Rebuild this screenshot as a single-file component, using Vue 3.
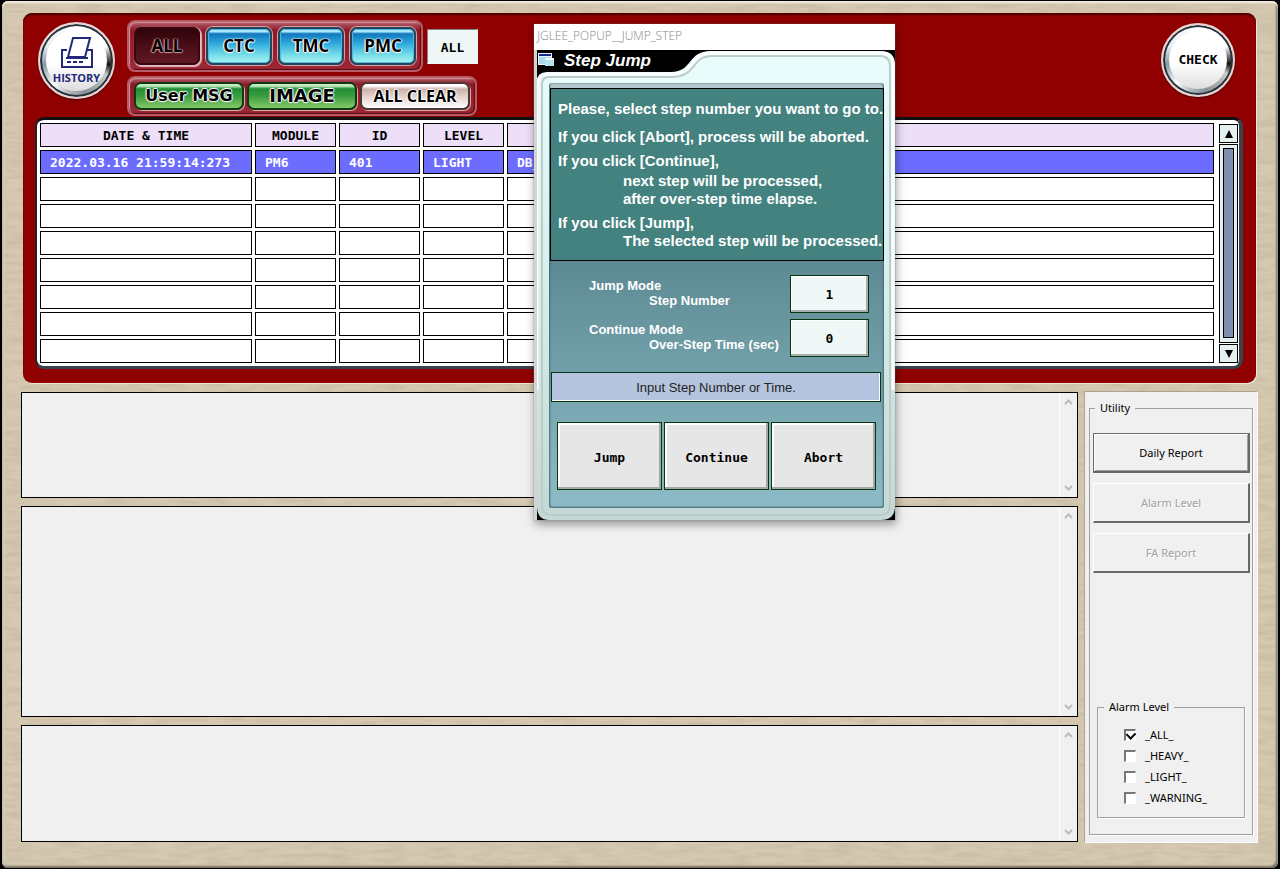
<script setup>
import { ref } from 'vue'

const modules = ['ALL', 'CTC', 'TMC', 'PMC']
const activeModule = ref('ALL')
const filter = ref('ALL')
const columns = ['DATE & TIME', 'MODULE', 'ID', 'LEVEL', '']
const alarms = [['2022.03.16 21:59:14:273', 'PM6', '401', 'LIGHT', 'DB_']]
const emptyRows = 7
const panes = ['first', 'second', 'third']
const reports = [
  { name: 'Daily Report', enabled: true },
  { name: 'Alarm Level', enabled: false },
  { name: 'FA Report', enabled: false },
]
const levels = ref([
  { name: '_ALL_', on: true },
  { name: '_HEAVY_', on: false },
  { name: '_LIGHT_', on: false },
  { name: '_WARNING_', on: false },
])
const stepNumber = ref('1')
const overTime = ref('0')
</script>

<template>
  <div class="screen">
    <main class="frame">
      <svg class="texture" aria-hidden="true">
        <filter id="grain" x="0" y="0" width="100%" height="100%">
          <feTurbulence type="fractalNoise" baseFrequency="0.04 0.22" numOctaves="2" seed="4" />
          <feColorMatrix values="0 0 0 0 0.5  0 0 0 0 0.43  0 0 0 0 0.3  1 0 0 0 -0.35" />
        </filter>
        <rect width="100%" height="100%" filter="url(#grain)" />
      </svg>

      <section class="alarm">
        <header class="toolbar">
          <button class="round history" type="button">
            <svg width="34" height="34" viewBox="0 0 34 34" fill="none" stroke="#23297a" stroke-width="2">
              <path d="M7 14H2V31H32V14H27M6 22H28" />
              <path d="M13 2H30L25 21H8Z" fill="#fff" />
              <path d="M7 26H11M13 26H17M19 26H23" />
            </svg>
            <span>HISTORY</span>
          </button>
          <div class="groups">
            <div class="line">
              <div class="group modules">
                <button
                  v-for="m in modules"
                  :key="m"
                  type="button"
                  :class="['module', { active: m === activeModule }]"
                  @click="activeModule = m"
                >{{ m }}</button>
              </div>
              <input v-model="filter" class="filter" aria-label="Module filter" />
            </div>
            <div class="group actions">
              <button type="button" class="green">User MSG</button>
              <button type="button" class="green image">IMAGE</button>
              <button type="button" class="clear">ALL CLEAR</button>
            </div>
          </div>
          <button class="round check" type="button">CHECK</button>
        </header>

        <div class="list">
          <table>
            <colgroup>
              <col class="c-date" /><col class="c-mid" /><col class="c-mid" /><col class="c-mid" /><col />
            </colgroup>
            <thead>
              <tr><th v-for="(c, i) in columns" :key="i">{{ c }}</th></tr>
            </thead>
            <tbody>
              <tr v-for="(row, r) in alarms" :key="r" class="selected">
                <td v-for="(cell, i) in row" :key="i">{{ cell }}</td>
              </tr>
              <tr v-for="n in emptyRows" :key="'e' + n">
                <td v-for="(c, i) in columns" :key="i"></td>
              </tr>
            </tbody>
          </table>
          <div class="scroll">
            <button type="button" aria-label="Scroll up">
              <svg width="8" height="8" viewBox="0 0 8 8"><path d="M4 0L8 8H0Z" /></svg>
            </button>
            <div class="track"><div class="thumb"></div></div>
            <button type="button" aria-label="Scroll down">
              <svg width="8" height="8" viewBox="0 0 8 8"><path d="M0 0H8L4 8Z" /></svg>
            </button>
          </div>
        </div>
      </section>

      <section class="lower">
        <div class="panes">
          <div v-for="p in panes" :key="p" :class="['pane', p]">
            <textarea readonly :aria-label="p + ' message pane'"></textarea>
            <div class="arrows">
              <svg width="9" height="6" viewBox="0 0 9 6"><path d="M1 5L4.500 1.500L8 5" /></svg>
              <svg width="9" height="6" viewBox="0 0 9 6"><path d="M1 1L4.500 4.500L8 1" /></svg>
            </div>
          </div>
        </div>
        <aside class="side">
          <fieldset class="utility">
            <legend>Utility</legend>
            <button v-for="r in reports" :key="r.name" type="button" class="report" :disabled="!r.enabled">
              {{ r.name }}
            </button>
            <fieldset class="levels">
              <legend>Alarm Level</legend>
              <label v-for="l in levels" :key="l.name">
                <input v-model="l.on" type="checkbox" />{{ l.name }}
              </label>
            </fieldset>
          </fieldset>
        </aside>
      </section>
    </main>

    <div class="popup" role="dialog" aria-label="Step Jump">
      <div class="caption">JGLEE_POPUP__JUMP_STEP</div>
      <div class="shell">
        <svg class="folder" viewBox="0 0 358 470" preserveAspectRatio="none" aria-hidden="true">
          <defs>
            <linearGradient id="mint" x1="0" y1="0" x2="0" y2="1">
              <stop offset="0" stop-color="#eafdfd" />
              <stop offset="0.5" stop-color="#d6eeec" />
              <stop offset="1" stop-color="#c2d9d5" />
            </linearGradient>
          </defs>
          <path d="M0 32Q0 22 10 22H134C156 22 150 1 174 1H344Q358 1 358 15V456Q358 470 344 470H12Q0 470 0 456Z" fill="url(#mint)" />
          <path d="M0 340V33Q2 24 11 24H134C158 24 152 3 174 3H344Q356 3 356 15V340" fill="none" stroke="#fafefe" stroke-width="3" />
          <path d="M5 455V34Q5 27 12 27H135C160 27 154 6 175 6H343Q353 6 353 16V455Q353 465 343 465H14Q5 465 5 455Z" fill="none" stroke="#becbc8" stroke-width="2" />
        </svg>
        <h1>
          <svg width="17" height="15" viewBox="0 0 17 15">
            <path d="M0 0H14V12H0Z" fill="#e9f7fb" />
            <path d="M1 1H13V3H1Z" fill="#152b8c" />
            <path d="M1 4H13V11H1Z" fill="#a9d9ed" />
            <path d="M7 5H16V13H7Z" fill="#b7e0f1" />
            <path d="M7 5H16V7H7Z" fill="#f4fbff" />
          </svg>
          Step Jump
        </h1>
        <div class="panel">
          <div class="info">
            <p>Please, select step number you want to go to.</p>
            <p>If you click [Abort], process will be aborted.</p>
            <p>If you click [Continue],</p>
            <p class="indent">next step will be processed,<br />after over-step time elapse.</p>
            <p>If you click [Jump],</p>
            <p class="indent">The selected step will be processed.</p>
          </div>
          <div class="fields">
            <label for="step">Jump Mode<span>Step Number</span></label>
            <input id="step" v-model="stepNumber" />
            <label for="over">Continue Mode<span>Over-Step Time (sec)</span></label>
            <input id="over" v-model="overTime" />
          </div>
          <div class="message">Input Step Number or Time.</div>
          <div class="choices">
            <button type="button">Jump</button>
            <button type="button">Continue</button>
            <button type="button">Abort</button>
          </div>
        </div>
      </div>
    </div>
  </div>
</template>

<style>
body { background: #000; }
</style>

<style scoped>
* { box-sizing: border-box; }
button, input, textarea { margin: 0; font: inherit; color: inherit; border-radius: 0; }
button { padding: 0; }

.screen {
  position: relative;
  display: flex;
  min-height: 100vh;
  padding: 1px 2px 2px;
  font-family: "Noto Sans", sans-serif;
  font-size: 11px;
  color: #000;
}
.frame {
  position: relative;
  flex: 1;
  display: flex;
  flex-direction: column;
  gap: 8px;
  padding: 12px 21px 26px 19px;
  border-radius: 6px;
  background: #d6c9b2;
  box-shadow: inset 0 2px 2px #f5ebe2, inset -2px -2px 2px #746c5e, inset 1px 0 1px #aaa08e;
}
.texture { position: absolute; inset: 3px; width: calc(100% - 6px); height: calc(100% - 6px); }

/* Alarm list */
.alarm {
  position: relative;
  margin: 0 1px 0 2px;
  padding: 7px 13px 14px 12px;
  border-radius: 9px;
  background: #900000;
  box-shadow: inset 0 2px 2px #4a0000, 1px 1px 0 #f3e6d8;
}
.toolbar { display: flex; align-items: flex-start; height: 97px; padding: 0 8px 0 3px; }
.round {
  display: flex;
  flex-direction: column;
  align-items: center;
  justify-content: center;
  border: 2px solid #e9d3d3;
  border-radius: 50%;
  background: conic-gradient(#fff 0 18%, #777 23%, #111 27%, #c6cdc6 32%, #889298 46%, #b3babf 54%, #fff 62%, #8799a5 73%, #e6edf1 82%, #fff);
  box-shadow: inset 0 0 0 2px #263138, 0 1px 2px #400;
  position: relative;
}
.round::before {
  content: "";
  position: absolute;
  inset: 6px;
  border-radius: 50%;
  background: linear-gradient(#fff 55%, #dedede);
}
.round > * { position: relative; }
.history { width: 77px; height: 77px; margin-top: 2px; color: #23297a; font: bold 11px/14px "Open Sans", sans-serif; }
.history svg { margin-bottom: 1px; }
.check { width: 74px; height: 74px; margin: 3px 0 0 auto; font: bold 13px/16px "DejaVu Sans Mono", monospace; isolation: isolate; }
.check::before { z-index: -1; }
.groups { display: flex; flex-direction: column; align-items: flex-start; gap: 4px; margin-left: 12px; }
.line { display: flex; align-items: center; gap: 4px; }
.group {
  display: flex;
  border: 2px solid #b65c69;
  border-radius: 8px;
  background: linear-gradient(#b2606c, #8e1824 18%, #9b2634 90%);
  box-shadow: inset 1px 1px 1px #d897a1, inset -1px -1px 1px #5b0711;
}
.modules { gap: 6px; padding: 5px; }
.module {
  width: 66px;
  height: 38px;
  border: 2px solid #23465c;
  border-radius: 7px;
  background: linear-gradient(#a9e8fb 0 8%, #1378bd 14%, #2ea8de 42%, #74dce7 75%, #a8f3ef);
  box-shadow: 0 0 0 1px #d99fa9, inset 0 0 0 1px #4fb6df;
  font: bold 17px/20px "Open Sans", sans-serif;
  text-shadow: 0 0 2px #fff, 1px 0 1px #fff, -1px 0 1px #fff, 0 1px 1px #fff;
}
.module.active {
  border-color: #37070d;
  background: linear-gradient(#32030a, #5f1924);
  box-shadow: 1px 1px 1px 1px #e4bcc3;
  text-shadow: 0 0 2px #d29da4, 1px 0 1px #c68f96, -1px 0 1px #c68f96, 0 1px 1px #c68f96;
}
.filter {
  width: 51px;
  height: 35px;
  padding: 2px 0 0;
  border: 1px solid #a9a2a2;
  border-color: #8c8484 #f4f7f7 #f4f7f7 #8c8484;
  background: #eff6f6;
  text-align: center;
  font: bold 13px/16px "DejaVu Sans Mono", monospace;
}
.actions { gap: 3px; padding: 4px 5px; }
.actions button {
  width: 110px;
  height: 28px;
  border: 2px solid #123715;
  border-radius: 7px;
  box-shadow: 1px 1px 0 #dda8a5;
  text-shadow: 0 0 2px #fff, 1px 0 1px #fff, -1px 0 1px #fff, 0 1px 1px #fff, 0 -1px 1px #fff;
}
.actions .green {
  background: linear-gradient(#c3edc1 0 8%, #238c34 20%, #3b9c40 50%, #84c968);
  font: bold 16px/20px "DejaVu Sans", sans-serif;
}
.actions .image { font-size: 18px; }
.actions .clear {
  border-color: #4d3833;
  background: linear-gradient(#fff 0 8%, #ccb1aa 22%, #e3d0ca 50%, #fff);
  font: bold 16px/20px "Open Sans", sans-serif;
}

.list {
  display: flex;
  border: 3px solid #252a31;
  border-color: #111 #39434d #39434d #202328;
  border-right-width: 4px;
  border-left-width: 2px;
  border-radius: 9px;
  background: #fff;
  font: bold 13px/16px "DejaVu Sans Mono", monospace;
}
table { flex: 1; min-width: 0; table-layout: fixed; border-spacing: 3px; }
.c-date { width: 212px; }
.c-mid { width: 81px; }
th, td { height: 24px; padding: 1px 9px 0; border: 1px solid #000; overflow: hidden; white-space: nowrap; }
th { background: #eddff7; }
td { background: #fff; text-align: left; }
.selected td { background: #6c6cff; color: #fff; }
.scroll { display: flex; flex-direction: column; gap: 1px; width: 20px; margin: 4px 0 3px 2px; }
.scroll button {
  display: flex;
  align-items: center;
  justify-content: center;
  flex: none;
  height: 19px;
  width: 19px;
  border: 1px solid #000;
  background: #e4efef;
}
.track { flex: 1; display: flex; width: 19px; padding: 3px 2px 4px; border: 1px solid #000; background: #e4efef; }
.thumb { flex: 1; margin: 0 1px; border: 1px solid #000; background: #7f8fae; }

/* Message panes and side panel */
.lower { position: relative; flex: 1; display: flex; gap: 6px; }
.panes { flex: 1; display: flex; flex-direction: column; gap: 8px; padding-top: 1px; }
.pane { display: flex; border: 1px solid #000; background: #f0f0f0; }
.first { flex: 105; }
.second { flex: 212; }
.third { flex: 117; }
textarea { flex: 1; min-width: 0; min-height: 0; border: 0; background: transparent; resize: none; outline: 0; }
.arrows {
  display: flex;
  flex-direction: column;
  align-items: center;
  justify-content: space-between;
  width: 18px;
  padding: 6px 0;
  border-left: 1px solid #fff;
}
.arrows path { fill: none; stroke: #bcbcbc; stroke-width: 2; }
.side {
  display: flex;
  width: 173px;
  padding: 9px 4px 7px 5px;
  background: #f0f0f0;
  box-shadow: inset 1px 1px 0 #aaa295, 1px 1px 0 #fff;
}
fieldset { margin: 0; min-width: 0; border: 1px solid #a0a0a0; box-shadow: 1px 1px 0 #fff; }
legend { padding: 0 5px; line-height: 16px; }
.utility { flex: 1; padding: 17px 2px 16px 3px; }
.utility > legend { margin-left: 2px; }
.report {
  display: block;
  width: 100%;
  height: 40px;
  margin-bottom: 10px;
  border: 1px solid #fff;
  border-right: 2px solid #696969;
  border-bottom: 2px solid #696969;
  background: #f0f0f0;
}
.report:enabled { border: 2px solid #696969; border-width: 1px 2px 2px 1px; box-shadow: inset 1px 1px 0 #fff, inset -1px -1px 0 #a0a0a0; }
.report:disabled { color: #a0a0a0; text-shadow: 1px 1px 0 #fff; }
.levels { margin: 126px 5px 0 4px; padding: 9px 0 9px 26px; }
.levels legend { margin-left: -20px; }
.levels label { display: flex; align-items: center; gap: 9px; height: 21px; }
.levels input {
  display: flex;
  width: 12px;
  height: 12px;
  appearance: none;
  border: 1px solid #fff;
  border-top: 2px solid #777;
  border-left: 2px solid #777;
  background: #fff;
}
.levels input:checked::after {
  content: "";
  width: 8px;
  height: 5px;
  margin: 0 0 0 1px;
  border-left: 2px solid #000;
  border-bottom: 2px solid #000;
  transform: rotate(-45deg);
}

/* Step Jump window */
.popup {
  position: absolute;
  left: 534px;
  top: 24px;
  width: 361px;
  padding-left: 3px;
  background: #d2d3d3;
  box-shadow: 0 0 1px #777, 1px 4px 9px #0006;
}
.caption {
  height: 26px;
  margin-left: -3px;
  padding-left: 3px;
  background: #fff;
  color: #888;
  font: 300 12px/24px "Open Sans", sans-serif;
}
.shell { position: relative; padding: 0 11px 12px 12px; background: #000; }
.folder { position: absolute; left: 0; top: 0; width: 100%; height: 100%; }
h1 {
  position: relative;
  display: flex;
  align-items: center;
  gap: 9px;
  height: 21px;
  margin: 0 0 12px -11px;
  color: #fff;
  font: italic bold 17px/20px "Liberation Sans", sans-serif;
}
.panel {
  position: relative;
  padding-top: 5px;
  border-radius: 3px;
  background: linear-gradient(#b6c8cd 5px, #5b8890 170px, #8dbcc8);
  box-shadow: inset 1px -1px 2px #476b74, inset -1px 0 2px #476b74;
  color: #fff;
}
.info {
  margin-left: 1px;
  height: 173px;
  padding: 11px 7px 0;
  border: 1px solid #000;
  background: #43827f;
  font: bold 15px/18px "Liberation Sans", sans-serif;
  white-space: nowrap;
}
.info p { margin: 0 0 6px; }
.info p:first-child { margin-bottom: 10px; }
.info p:nth-child(3) { margin-bottom: 2px; }
.info p:nth-child(5) { margin-bottom: 0; }
.info .indent { padding-left: 65px; }
.fields {
  display: grid;
  grid-template-columns: 1fr 79px;
  gap: 6px;
  padding: 14px 15px 0 40px;
  font: bold 13px/15px "Liberation Sans", sans-serif;
}
.fields label { align-self: start; padding-top: 3px; }
.fields span { display: block; padding-left: 60px; }
.fields input {
  width: 79px;
  height: 38px;
  padding: 0;
  border: 1px solid #083612;
  background: #eff7f7;
  box-shadow: inset -2px -2px 0 #a8aeae, inset 1px 1px 0 #fff;
  color: #000;
  text-align: center;
  font: bold 13px/16px "DejaVu Sans Mono", monospace;
}
.message {
  height: 30px;
  margin: 15px 3px 20px 2px;
  border: 1px solid #083612;
  background: #b5c4de;
  box-shadow: inset -1px -1px 0 #fff;
  color: #222;
  text-align: center;
  font: 13px/30px "Liberation Sans", sans-serif;
}
.choices { display: flex; gap: 2px; padding: 0 8px 18px; }
.choices button {
  flex: 1;
  height: 68px;
  padding-top: 3px;
  border: 1px solid #083612;
  background: #e6e6e6;
  box-shadow: inset -2px -2px 0 #a3a8a5, inset 2px 2px 0 #fff;
  color: #000;
  font: bold 13px/16px "DejaVu Sans Mono", monospace;
}
</style>
